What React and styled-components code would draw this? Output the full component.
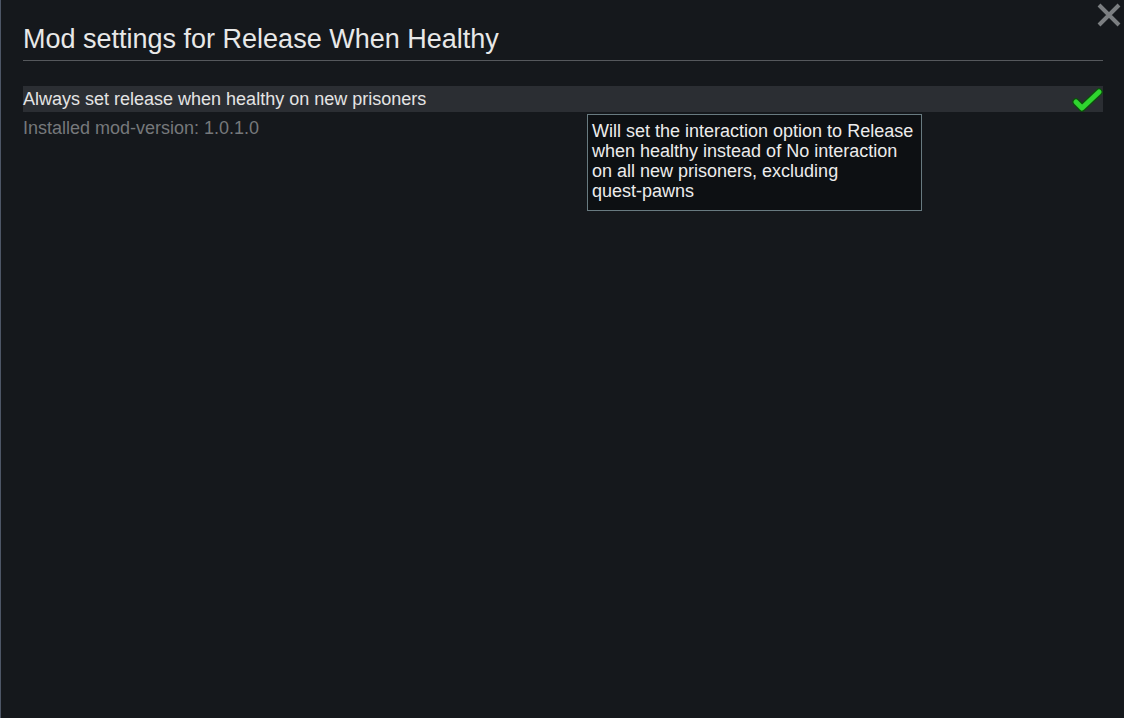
import React from "react";
import styled, { createGlobalStyle } from "styled-components";

const GlobalStyle = createGlobalStyle`
  html, body {
    margin: 0;
    padding: 0;
    background: #15181c;
  }
  body {
    font-family: "Liberation Sans", Arial, sans-serif;
  }
`;

const Window = styled.div`
  position: relative;
  box-sizing: border-box;
  width: 1124px;
  height: 718px;
  background: #15181c;
  border-left: 1px solid #4d5666;
  padding: 22px 21px 0 22px;
  color: #e6e6e6;
`;

const Title = styled.h1`
  margin: 0;
  font-size: 27px;
  font-weight: normal;
  line-height: 34px;
  color: #e8e8e8;
  padding-bottom: 4px;
  border-bottom: 1px solid #55585c;
`;

const OptionRow = styled.div`
  display: flex;
  align-items: center;
  justify-content: space-between;
  margin-top: 25px;
  height: 26px;
  background: #2b2e33;
`;

const OptionLabel = styled.span`
  font-size: 18px;
  line-height: 25px;
  color: #e4e4e4;
`;

const Check = styled.svg`
  width: 32px;
  height: 26px;
`;

const Version = styled.div`
  font-size: 18px;
  line-height: 20px;
  margin-top: 6px;
  color: #76787b;
`;

const Tooltip = styled.div`
  position: absolute;
  left: 586px;
  top: 114px;
  box-sizing: border-box;
  width: 335px;
  height: 97px;
  padding: 6px 4px 8px 4px;
  background: #0d1013;
  border: 1px solid #687a80;
  font-size: 18px;
  line-height: 20px;
  color: #ececec;
`;

const NoWrap = styled.span`
  white-space: nowrap;
`;

const CloseButton = styled.button`
  position: absolute;
  top: 2px;
  right: 2px;
  width: 26px;
  height: 26px;
  padding: 0;
  border: none;
  background: transparent;
  cursor: pointer;
`;

const App = () => {
  return (
    <>
      <GlobalStyle />
      <Window>
        <CloseButton aria-label="Close">
          <svg width="26" height="26" viewBox="0 0 26 26">
            <path
              d="M3 3 L23 23 M23 3 L3 23"
              stroke="#7b7e81"
              strokeWidth="4"
              fill="none"
            />
          </svg>
        </CloseButton>
        <Title>Mod settings for Release When Healthy</Title>
        <OptionRow>
          <OptionLabel>Always set release when healthy on new prisoners</OptionLabel>
          <Check viewBox="0 0 32 26">
            <path
              d="M5 16 L11 22 L28 6"
              stroke="#0d4f0d"
              strokeWidth="7.5"
              strokeLinecap="round"
              strokeLinejoin="round"
              fill="none"
            />
            <path
              d="M5 16 L11 22 L28 6"
              stroke="#2fd52f"
              strokeWidth="5"
              strokeLinecap="round"
              strokeLinejoin="round"
              fill="none"
            />
          </Check>
        </OptionRow>
        <Version>Installed mod-version: 1.0.1.0</Version>
        <Tooltip>
          Will set the interaction option to Release when healthy instead of
          No interaction on all new prisoners, excluding{" "}
          <NoWrap>quest-pawns</NoWrap>
        </Tooltip>
      </Window>
    </>
  );
};

export default App;
